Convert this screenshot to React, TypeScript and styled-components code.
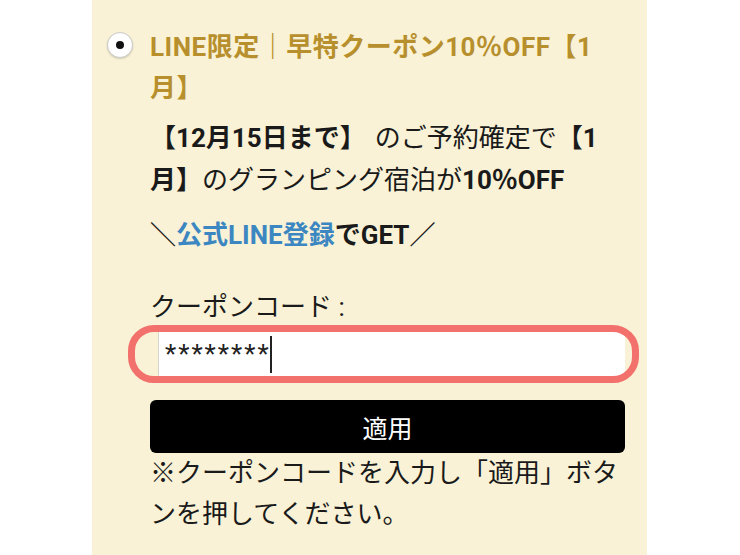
import styled, { createGlobalStyle } from "styled-components";

const GlobalStyle = createGlobalStyle`
  html, body {
    margin: 0;
    padding: 0;
    background: #ffffff;
  }
  body {
    font-family: Roboto, "Noto Sans CJK JP", sans-serif;
    color: #1a1a1a;
  }
`;

const Page = styled.div`
  height: 555px;
  overflow: hidden;
`;

const Panel = styled.div`
  margin-left: 92px;
  width: 555px;
  height: 555px;
  box-sizing: border-box;
  padding: 27px 22px 0 15px;
  background: #f9f2d6;
`;

const Option = styled.div`
  display: grid;
  grid-template-columns: 43px 1fr;
  align-items: start;
`;

const Radio = styled.span`
  margin-top: 5px;
  width: 26px;
  height: 26px;
  box-sizing: border-box;
  border-radius: 50%;
  border: 1.5px solid #c9c9c6;
  background: #ffffff;
  box-shadow: 0 1px 2px rgba(0, 0, 0, 0.15);
  display: flex;
  align-items: center;
  justify-content: center;

  &::after {
    content: "";
    width: 8px;
    height: 8px;
    border-radius: 50%;
    background: #111111;
  }
`;

const Content = styled.div`
  display: flex;
  flex-direction: column;
  min-width: 0;
`;

const Title = styled.div`
  font-size: 26px;
  line-height: 41px;
  letter-spacing: 0.5px;
  font-weight: 700;
  color: #b78f2d;
`;

const Text = styled.p<{ $top: number; $lh?: number }>`
  margin: ${(p) => p.$top}px 0 0;
  font-size: 26px;
  line-height: ${(p) => p.$lh ?? 42}px;
  font-weight: 400;
`;

const Strong = styled.b<{ $after?: number }>`
  font-weight: 700;
  margin-right: ${(p) => p.$after ?? 0}px;
`;

const Link = styled.a`
  color: #3c87c2;
  font-weight: 700;
  text-decoration: none;
`;

const FieldWrap = styled.div`
  position: relative;
  margin: 4px 0 0 8px;
`;

const Field = styled.div`
  height: 44px;
  box-sizing: border-box;
  background: #ffffff;
  border-left: 1px solid #d6d3cb;
  padding-left: 6px;
  display: flex;
  align-items: center;
  font-family: Roboto, sans-serif;
  font-size: 26px;
  letter-spacing: 2px;
  color: #222222;
`;

const Caret = styled.span`
  display: inline-block;
  width: 2px;
  height: 37px;
  margin-left: -1px;
  background: #222222;
`;

/* red highlight drawn over the field */
const Highlight = styled.span`
  position: absolute;
  left: -30px;
  right: -14px;
  top: -7px;
  bottom: -7px;
  border: 7px solid #f2716d;
  border-radius: 26px;
  pointer-events: none;
`;

const ApplyButton = styled.button`
  margin-top: 24px;
  height: 53px;
  width: 100%;
  border: none;
  border-radius: 6px;
  background: #000000;
  color: #ffffff;
  font-family: Roboto, "Noto Sans CJK JP", sans-serif;
  font-size: 25px;
  cursor: pointer;
`;

export default function App() {
  return (
    <Page>
      <GlobalStyle />
      <Panel>
        <Option>
          <Radio />
          <Content>
            <Title>LINE限定｜早特クーポン10％OFF【1月】</Title>
            <Text $top={8}>
              <Strong $after={9}>【12月15日まで】</Strong>のご予約確定で
              <Strong>【1</Strong>
              <Strong>月】</Strong>のグランピング宿泊が<Strong>10％OFF</Strong>
            </Text>
            <Text $top={13}>
              <Strong>
                ＼<Link href="#">公式LINE登録</Link>でGET／
              </Strong>
            </Text>
            <Text $top={30}>クーポンコード :</Text>
            <FieldWrap>
              <Field>
                ********
                <Caret />
              </Field>
              <Highlight />
            </FieldWrap>
            <ApplyButton>適用</ApplyButton>
            <Text $top={0} $lh={41}>
              ※クーポンコードを入力し「適用」ボタンを押してください。
            </Text>
          </Content>
        </Option>
      </Panel>
    </Page>
  );
}
